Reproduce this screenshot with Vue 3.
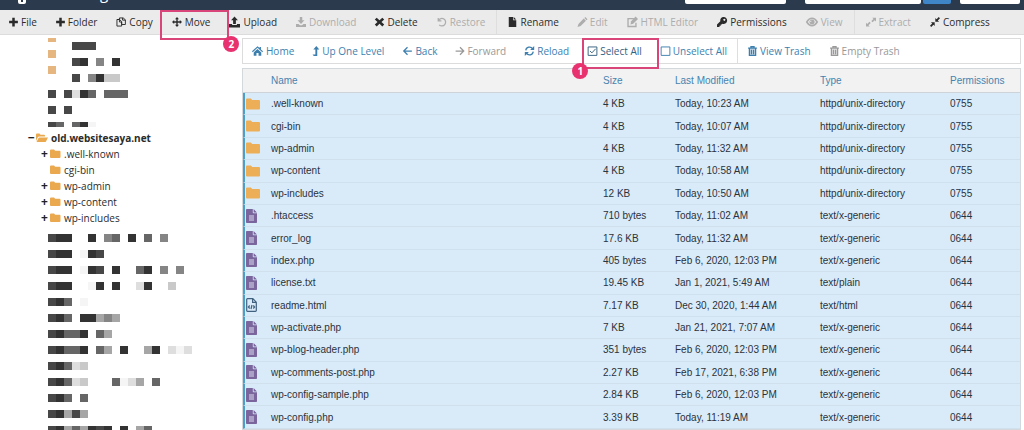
<template>
  <div class="file-manager">
    <header class="top-bar">
      <svg class="logo" viewBox="0 0 10 10" aria-hidden="true">
        <path d="M1 0h8v8a2 2 0 0 1-2 2H3a2 2 0 0 1-2-2z" fill="#fff" />
        <path d="M4 5h2v3H4z" fill="#2c3a4e" />
      </svg>
      <h1 class="title">File Manager</h1>
      <form class="search" @submit.prevent>
        <select v-model="scope" class="field scope" aria-label="Search in">
          <option value=""></option>
        </select>
        <input v-model="query" class="field query" type="text" aria-label="Search" />
        <button class="go" type="submit" aria-label="Go"></button>
        <button class="field settings" type="button" aria-label="Settings"></button>
      </form>
    </header>

    <nav class="toolbar">
      <template v-for="item in tools" :key="item.label">
        <span v-if="item.divider" class="divider"></span>
        <button type="button" class="tool" :class="{ marked: item.step }" :disabled="item.disabled">
          <svg class="icon" :class="item.icon" viewBox="0 0 16 16" preserveAspectRatio="xMidYMid slice" aria-hidden="true">
            <path v-if="icons[item.icon].fill" class="solid" :d="icons[item.icon].fill" />
            <path v-if="icons[item.icon].line" class="line" :d="icons[item.icon].line" />
          </svg>
          <span>{{ item.label }}</span>
          <span v-if="item.step" class="mark mark-tool"><b class="step">{{ item.step }}</b></span>
        </button>
      </template>
    </nav>

    <div class="content">
      <aside class="sidebar">
        <svg class="mosaic" width="242" height="92" aria-hidden="true">
          <rect v-for="y in [-4, 12, 28]" :key="y" x="48" :y="y" width="8" height="8" fill="#e6b681" />
          <rect
            v-for="cell in topCells"
            :key="cell.key"
            :x="cell.x"
            :y="cell.y"
            width="8"
            :height="cell.y > 80 ? 5 : 8"
            :fill="cell.color"
          />
        </svg>

        <ul class="tree">
          <li class="node root">
            <span class="toggle">−</span>
            <svg class="tree-folder" viewBox="0 0 12 10" aria-hidden="true">
              <path d="M0 8V1.500Q0 .500 1 .500h2.500l1 1.200H8q1 0 1 1v.800H3.200Q2.300 3.500 1.800 4.300zM.500 9l2-4q.300-.600 1-.600H12L10 8.500q-.300.500-1 .500z" />
            </svg>
            <a href="#" @click.prevent>old.websitesaya.net</a>
          </li>
          <li v-for="node in nodes" :key="node.name" class="node">
            <span class="toggle">{{ node.leaf ? '' : '+' }}</span>
            <svg class="tree-folder" viewBox="0 0 12 10" aria-hidden="true">
              <path d="M1 1.500q0-1 1-1h3l1.200 1.200H10.500q1 0 1 1V8q0 1-1 1H2Q1 9 1 8z" />
            </svg>
            <a href="#" @click.prevent>{{ node.name }}</a>
          </li>
        </ul>

        <svg class="mosaic" width="242" height="204" aria-hidden="true">
          <rect
            v-for="cell in bottomCells"
            :key="cell.key"
            :x="cell.x"
            :y="cell.y"
            width="8"
            height="8"
            :fill="cell.color"
          />
        </svg>
      </aside>

      <main class="main">
        <div class="actions">
          <template v-for="item in actions" :key="item.label">
            <span v-if="item.divider" class="divider"></span>
            <button type="button" class="tool" :class="{ marked: item.step }" :disabled="item.disabled">
              <svg class="icon" :class="item.icon" viewBox="0 0 16 16" preserveAspectRatio="xMidYMid slice" aria-hidden="true">
                <path v-if="icons[item.icon].fill" class="solid" :d="icons[item.icon].fill" />
                <path v-if="icons[item.icon].line" class="line" :d="icons[item.icon].line" />
              </svg>
              <span>{{ item.label }}</span>
              <span v-if="item.step" class="mark mark-action"><b class="step">{{ item.step }}</b></span>
            </button>
          </template>
        </div>

        <table class="files">
          <thead>
            <tr>
              <th class="col-icon"></th>
              <th>Name</th>
              <th class="col-size">Size</th>
              <th class="col-date">Last Modified</th>
              <th class="col-type">Type</th>
              <th class="col-perms">Permissions</th>
            </tr>
          </thead>
          <tbody>
            <tr v-for="file in files" :key="file.name">
              <td class="col-icon">
                <svg v-if="file.perms === '0755'" class="folder-icon" viewBox="0 0 14 12" aria-hidden="true">
                  <path d="M0 1.500Q0 .500 1 .500h3.800L6.300 2H13q1 0 1 1v7.500q0 1-1 1H1q-1 0-1-1z" />
                </svg>
                <svg v-else-if="file.type === 'text/html'" class="html-icon" viewBox="0 0 11 14" aria-hidden="true">
                  <path d="M1.500.700h5.300l3.500 3.500v8.300q0 .800-.800.800h-8q-.800 0-.800-.800v-11q0-.800.800-.800zM6.600.700v3.700h3.700M3.700 7.500 2.400 9l1.300 1.500M7.300 7.500 8.600 9l-1.300 1.500M6 7l-1 4" />
                </svg>
                <svg v-else class="doc-icon" viewBox="0 0 11 14" aria-hidden="true">
                  <path fill="#7a659d" d="M.800 0h6v3.500q0 .700.700.700H11v9q0 .800-.800.800H.800q-.800 0-.800-.800V.800Q0 0 .800 0zM7.600 0 11 3.400H7.600z" />
                  <path fill="#dcdcf0" d="M3 6.500h5v1H3zm0 2h5v1H3zm0 2h5v1H3z" />
                </svg>
              </td>
              <td>{{ file.name }}</td>
              <td>{{ file.size }}</td>
              <td>{{ file.date }}</td>
              <td>{{ file.type }}</td>
              <td>{{ file.perms }}</td>
            </tr>
          </tbody>
        </table>
      </main>
    </div>
  </div>
</template>

<script setup>
import { ref } from 'vue';

const scope = ref('');
const query = ref('');

const icons = {
  plus: { fill: 'M6 1h4v5h5v4h-5v5H6v-5H1V6h5z' },
  copy: { line: 'M5.500 4V1.500h6L15 4.500V12H9M10.500 1.500V5H15M5 4H1.500v10.500H9V8M1.500 4H6l3 3.500v4M5.500 4v4H9' },
  move: { fill: 'M8 0l3.200 3.500H9.100V6.900h3.400V4.800L16 8l-3.500 3.200V9.100H9.100v3.400h2.100L8 16l-3.200-3.500h2.100V9.100H3.500v2.100L0 8l3.500-3.200v2.100h3.400V3.500H4.800z' },
  upload: { fill: 'M8 0l5 5.500H10V11H6V5.500H3zM0 11h4.500v1.500h7V11H16v5H0z' },
  download: { fill: 'M6 0h4v5h3.500L8 11 2.500 5H6zM0 11h4l2.500 2h3L12 11h4v5H0z' },
  times: { fill: 'M3.500 1 8 5.300 12.500 1 15.500 4 11.200 8l4.300 4-3 3L8 10.700 3.500 15l-3-3 4.300-4L.5 4z' },
  undo: { line: 'M2 1.500V6h5M2.500 5.500a6 6 0 1 1 1 7' },
  file: { fill: 'M2 0h7v5h5v11H2zM10 0l4 4h-4z' },
  pencil: { fill: 'M11 1.500 12.500 0 16 3.500 14.500 5zM10 2.500 13.500 6 5 14.500 0 16l1.500-5z' },
  edit: { line: 'M10 3H1.500v11.500H13V9', fill: 'M12.500 0 16 3.500l-7 7L5 11.500 6 7z' },
  key: { fill: 'M10.500 0a5.500 5.500 0 1 1-1.800 10.600L7.500 12H6v2H4v2H0v-4l5.300-5.200A5.500 5.500 0 0 1 10.500 0zm1.200 2.700a1.600 1.600 0 1 0 .1 0z' },
  eye: { line: 'M1 8q3-5 7-5t7 5q-3 5-7 5T1 8z', fill: 'M8 4.500a3.500 3.500 0 1 0 .1 0zM7 6v2H5.500Q5.500 6.500 7 6z' },
  extract: { fill: 'M10 1h6v6l-2-2-3.500 3.500-2-2L12 3zM0 9l2 2 3.500-3.500 2 2L4 13l2 2H0z' },
  compress: { fill: 'M14 0l2 2-3.500 3.500 2 2H8.500V1.500l2 2zM1.500 8.500h6v6l-2-2L2 16l-2-2 3.500-3.500z' },
  home: { fill: 'M8 1l3 2.800V2h2v3.700L16 8.500l-1 1.200L8 3.400 1 9.700 0 8.500zM8 5l5.500 5v5H9.500v-4h-3v4h-4v-5z' },
  level: { fill: 'M8.500 0l4.800 5.500H10V16H4.500L2.500 13.500H7v-8H3.700z' },
  left: { line: 'M8 2 2 8l6 6M2.500 8H15' },
  right: { line: 'M8 2l6 6-6 6M13.500 8H1' },
  reload: { line: 'M2 7a6 6 0 0 1 11-2.500M14 9a6 6 0 0 1-11 2.500', fill: 'M15.500 0v6.500H9zM.5 16V9.500H7z' },
  checked: { line: 'M1 1.500h14v13.500H1zM4 8l3 3 6-6.500' },
  unchecked: { line: 'M1 1.500h14v13.500H1z' },
  trash: { line: 'M1 3.500h14M5.500 3V1h5v2M3 4v11h10V4M6.300 6v7M9.700 6v7' }
};

const tools = [
  { label: 'File', icon: 'plus' },
  { label: 'Folder', icon: 'plus' },
  { label: 'Copy', icon: 'copy' },
  { label: 'Move', icon: 'move', step: 2 },
  { label: 'Upload', icon: 'upload' },
  { label: 'Download', icon: 'download', disabled: true },
  { label: 'Delete', icon: 'times' },
  { label: 'Restore', icon: 'undo', disabled: true },
  { label: 'Rename', icon: 'file', divider: true },
  { label: 'Edit', icon: 'pencil', disabled: true },
  { label: 'HTML Editor', icon: 'edit', disabled: true },
  { label: 'Permissions', icon: 'key' },
  { label: 'View', icon: 'eye', disabled: true },
  { label: 'Extract', icon: 'extract', disabled: true, divider: true },
  { label: 'Compress', icon: 'compress' }
];

const actions = [
  { label: 'Home', icon: 'home' },
  { label: 'Up One Level', icon: 'level' },
  { label: 'Back', icon: 'left' },
  { label: 'Forward', icon: 'right', disabled: true },
  { label: 'Reload', icon: 'reload' },
  { label: 'Select All', icon: 'checked', step: 1 },
  { label: 'Unselect All', icon: 'unchecked' },
  { label: 'View Trash', icon: 'trash', divider: true },
  { label: 'Empty Trash', icon: 'trash', disabled: true }
];

const nodes = [
  { name: '.well-known' },
  { name: 'cgi-bin', leaf: true },
  { name: 'wp-admin' },
  { name: 'wp-content' },
  { name: 'wp-includes' }
];

// Redacted entries: one letter per 8px cell, a is darkest, a dot is empty
const shades = {
  a: '#333333',
  b: '#474747',
  c: '#666666',
  d: '#858585',
  e: '#a6a6a6',
  f: '#c9c9c9',
  g: '#dedede',
  h: '#f5f5f5'
};

const toCells = (rows, offset) =>
  rows.flatMap((row, r) =>
    [...row]
      .map((shade, c) => ({
        key: `${r}-${c}`,
        x: 48 + c * 8,
        y: offset + r * 16,
        color: shades[shade]
      }))
      .filter((cell) => cell.color)
  );

const topCells = toCells(
  ['...bbb', '...ba.d.a', '...b.daff', 'b.bgac.ccc', 'b.b', 'bc.cah'],
  4
);

const bottomCells = toCells(
  [
    'baa..a.dc.a.c.d',
    'baa.hab',
    'baa.hab.a..ca.d.d',
    'baa..ha.a..ga..f',
    'bac.h',
    'bac.aaede',
    'bacca.ce',
    'bacca.ce.a..ea.ghg',
    'bacgf',
    'bacgf...chge.c',
    'bac.c',
    'baebe',
    'baeceaba.a.ec'
  ],
  8
);

const files = [
  { name: '.well-known', size: '4 KB', date: 'Today, 10:23 AM', type: 'httpd/unix-directory', perms: '0755' },
  { name: 'cgi-bin', size: '4 KB', date: 'Today, 10:07 AM', type: 'httpd/unix-directory', perms: '0755' },
  { name: 'wp-admin', size: '4 KB', date: 'Today, 11:32 AM', type: 'httpd/unix-directory', perms: '0755' },
  { name: 'wp-content', size: '4 KB', date: 'Today, 10:58 AM', type: 'httpd/unix-directory', perms: '0755' },
  { name: 'wp-includes', size: '12 KB', date: 'Today, 10:50 AM', type: 'httpd/unix-directory', perms: '0755' },
  { name: '.htaccess', size: '710 bytes', date: 'Today, 11:02 AM', type: 'text/x-generic', perms: '0644' },
  { name: 'error_log', size: '17.6 KB', date: 'Today, 11:32 AM', type: 'text/x-generic', perms: '0644' },
  { name: 'index.php', size: '405 bytes', date: 'Feb 6, 2020, 12:03 PM', type: 'text/x-generic', perms: '0644' },
  { name: 'license.txt', size: '19.45 KB', date: 'Jan 1, 2021, 5:49 AM', type: 'text/plain', perms: '0644' },
  { name: 'readme.html', size: '7.17 KB', date: 'Dec 30, 2020, 1:44 AM', type: 'text/html', perms: '0644' },
  { name: 'wp-activate.php', size: '7 KB', date: 'Jan 21, 2021, 7:07 AM', type: 'text/x-generic', perms: '0644' },
  { name: 'wp-blog-header.php', size: '351 bytes', date: 'Feb 6, 2020, 12:03 PM', type: 'text/x-generic', perms: '0644' },
  { name: 'wp-comments-post.php', size: '2.27 KB', date: 'Feb 17, 2021, 6:38 PM', type: 'text/x-generic', perms: '0644' },
  { name: 'wp-config-sample.php', size: '2.84 KB', date: 'Feb 6, 2020, 12:03 PM', type: 'text/x-generic', perms: '0644' },
  { name: 'wp-config.php', size: '3.39 KB', date: 'Today, 11:19 AM', type: 'text/x-generic', perms: '0644' }
];
</script>

<style>
body {
  margin: 0;
  background: #fff;
}
</style>

<style scoped>
.file-manager {
  display: flex;
  flex-direction: column;
  min-height: 100vh;
  font-family: "Open Sans", "Noto Sans", sans-serif;
  font-size: 10px;
  color: #333;
}

.top-bar {
  display: flex;
  align-items: flex-end;
  box-sizing: border-box;
  height: 10px;
  padding: 0 4px 6px 17px;
  overflow: hidden;
  background: #2c3a4e;
}

.logo {
  width: 10px;
  height: 10px;
  margin-right: 6px;
}

.title {
  margin: 0;
  font-size: 15px;
  font-weight: 400;
  line-height: 22px;
  color: #fff;
}

.search {
  display: flex;
  margin-left: auto;
}

.field,
.go {
  box-sizing: border-box;
  height: 24px;
  padding: 0;
  border: none;
  border-radius: 2px;
  background: #fff;
}

.scope {
  width: 101px;
  margin-right: 19px;
}

.query {
  width: 116px;
  margin-right: 2px;
}

.go {
  width: 28px;
  background: #3f86c8;
}

.settings {
  width: 60px;
  margin-left: 9px;
}

.toolbar {
  display: flex;
  box-sizing: border-box;
  height: 25px;
  gap: 1px;
  background: #ebebeb;
  border-bottom: 1px solid #dcdcdc;
}

.tool {
  position: relative;
  display: flex;
  align-items: center;
  gap: 3px;
  padding: 0 9px;
  border: none;
  background: none;
  font: inherit;
  line-height: 14px;
  white-space: nowrap;
  color: #2b2b2b;
  cursor: pointer;
}

.tool:disabled {
  color: #adadad;
  cursor: default;
}

.icon {
  flex: none;
  width: 10px;
  height: 10px;
  overflow: visible;
}

.icon.edit,
.icon.home {
  width: 11px;
}

.icon.eye {
  width: 12px;
}

.icon.plus,
.icon.pencil,
.icon.file,
.icon.times,
.icon.left,
.icon.reload,
.icon.checked,
.icon.unchecked,
.icon.trash {
  width: 9px;
}

.icon.upload {
  width: 11px;
}

.icon.right {
  width: 8px;
}

.icon.level {
  width: 6px;
}

.solid {
  fill: currentColor;
  fill-rule: evenodd;
}

.line {
  fill: none;
  stroke: currentColor;
  stroke-width: 2;
}

.checked .line,
.unchecked .line,
.copy .line {
  stroke-width: 1.5;
}

.trash .line {
  fill: currentColor;
  fill-opacity: 0.3;
}

.divider {
  width: 1px;
  margin: 0 1px;
  background: #dedede;
}

.mark {
  position: absolute;
  z-index: 2;
  border: 2px solid #d94579;
}

.mark-tool {
  inset: 0 -10px -6px -3px;
}

.mark-action {
  inset: -1px -8px -6px 3px;
}

.step {
  position: absolute;
  width: 16px;
  height: 16px;
  border-radius: 50%;
  background: #e8326f;
  font-size: 10px;
  line-height: 16px;
  text-align: center;
  color: #fff;
}

.mark-tool .step {
  right: -12px;
  bottom: -14px;
}

.mark-action .step {
  left: -12px;
  bottom: -12px;
}

.content {
  display: flex;
  flex: 1;
}

.sidebar {
  flex: none;
  width: 242px;
  padding-top: 3px;
}

.mosaic {
  display: block;
}

.tree {
  margin: 0;
  padding: 0;
  list-style: none;
}

.node {
  display: flex;
  align-items: center;
  height: 16px;
  padding-left: 40px;
}

.node.root {
  padding-left: 27px;
  font-weight: 700;
}

.node a {
  margin-left: 3px;
  line-height: 16px;
  text-decoration: none;
  color: #2b2b2b;
}

.toggle {
  width: 9px;
  font-size: 12px;
  font-weight: 700;
  line-height: 14px;
  text-align: center;
  color: #222;
}

.tree-folder {
  width: 12px;
  height: 10px;
  fill: #eba94f;
}

.main {
  display: flex;
  flex: 1;
  flex-direction: column;
  min-width: 0;
  padding: 3px 3px 0 0;
}

.actions {
  display: flex;
  box-sizing: border-box;
  height: 26px;
  margin-bottom: 4px;
  gap: 1px;
  border: 1px solid #dcdcdc;
}

.actions .tool {
  color: #3c7faf;
}

.actions .tool.marked {
  color: #35607f;
}

.actions .tool:disabled {
  color: #999;
}

.actions .divider {
  margin: 0;
}

.files {
  flex: 1;
  width: 100%;
  table-layout: fixed;
  border: 1px solid #d3d8dc;
  border-spacing: 0;
  font-family: "Liberation Sans", Arial, sans-serif;
  line-height: 12px;
  color: #2b323c;
}

.files th {
  height: 23px;
  padding: 0;
  border-bottom: 1px solid #cdd3d8;
  background: #f2f2f2;
  font-weight: 400;
  text-align: left;
  color: #4683b0;
}

.files td {
  padding: 5px 0 4px;
  border-bottom: 1px solid #d0e1ed;
  background: #d9ebf9;
}

.col-icon {
  width: 28px;
}

.files td.col-icon {
  box-sizing: border-box;
  padding: 0 0 0 1px;
  border-left: 2px solid #4c9fc9;
}

.col-size {
  width: 72px;
}

.col-date {
  width: 145px;
}

.col-type {
  width: 130px;
}

.col-perms {
  width: 70px;
}

.folder-icon,
.doc-icon,
.html-icon {
  display: block;
  width: 14px;
  height: 12px;
  fill: #edae58;
}

.doc-icon,
.html-icon {
  width: 11px;
  height: 14px;
}

.html-icon {
  fill: none;
  stroke: #41617f;
  stroke-width: 1.2;
}
</style>
